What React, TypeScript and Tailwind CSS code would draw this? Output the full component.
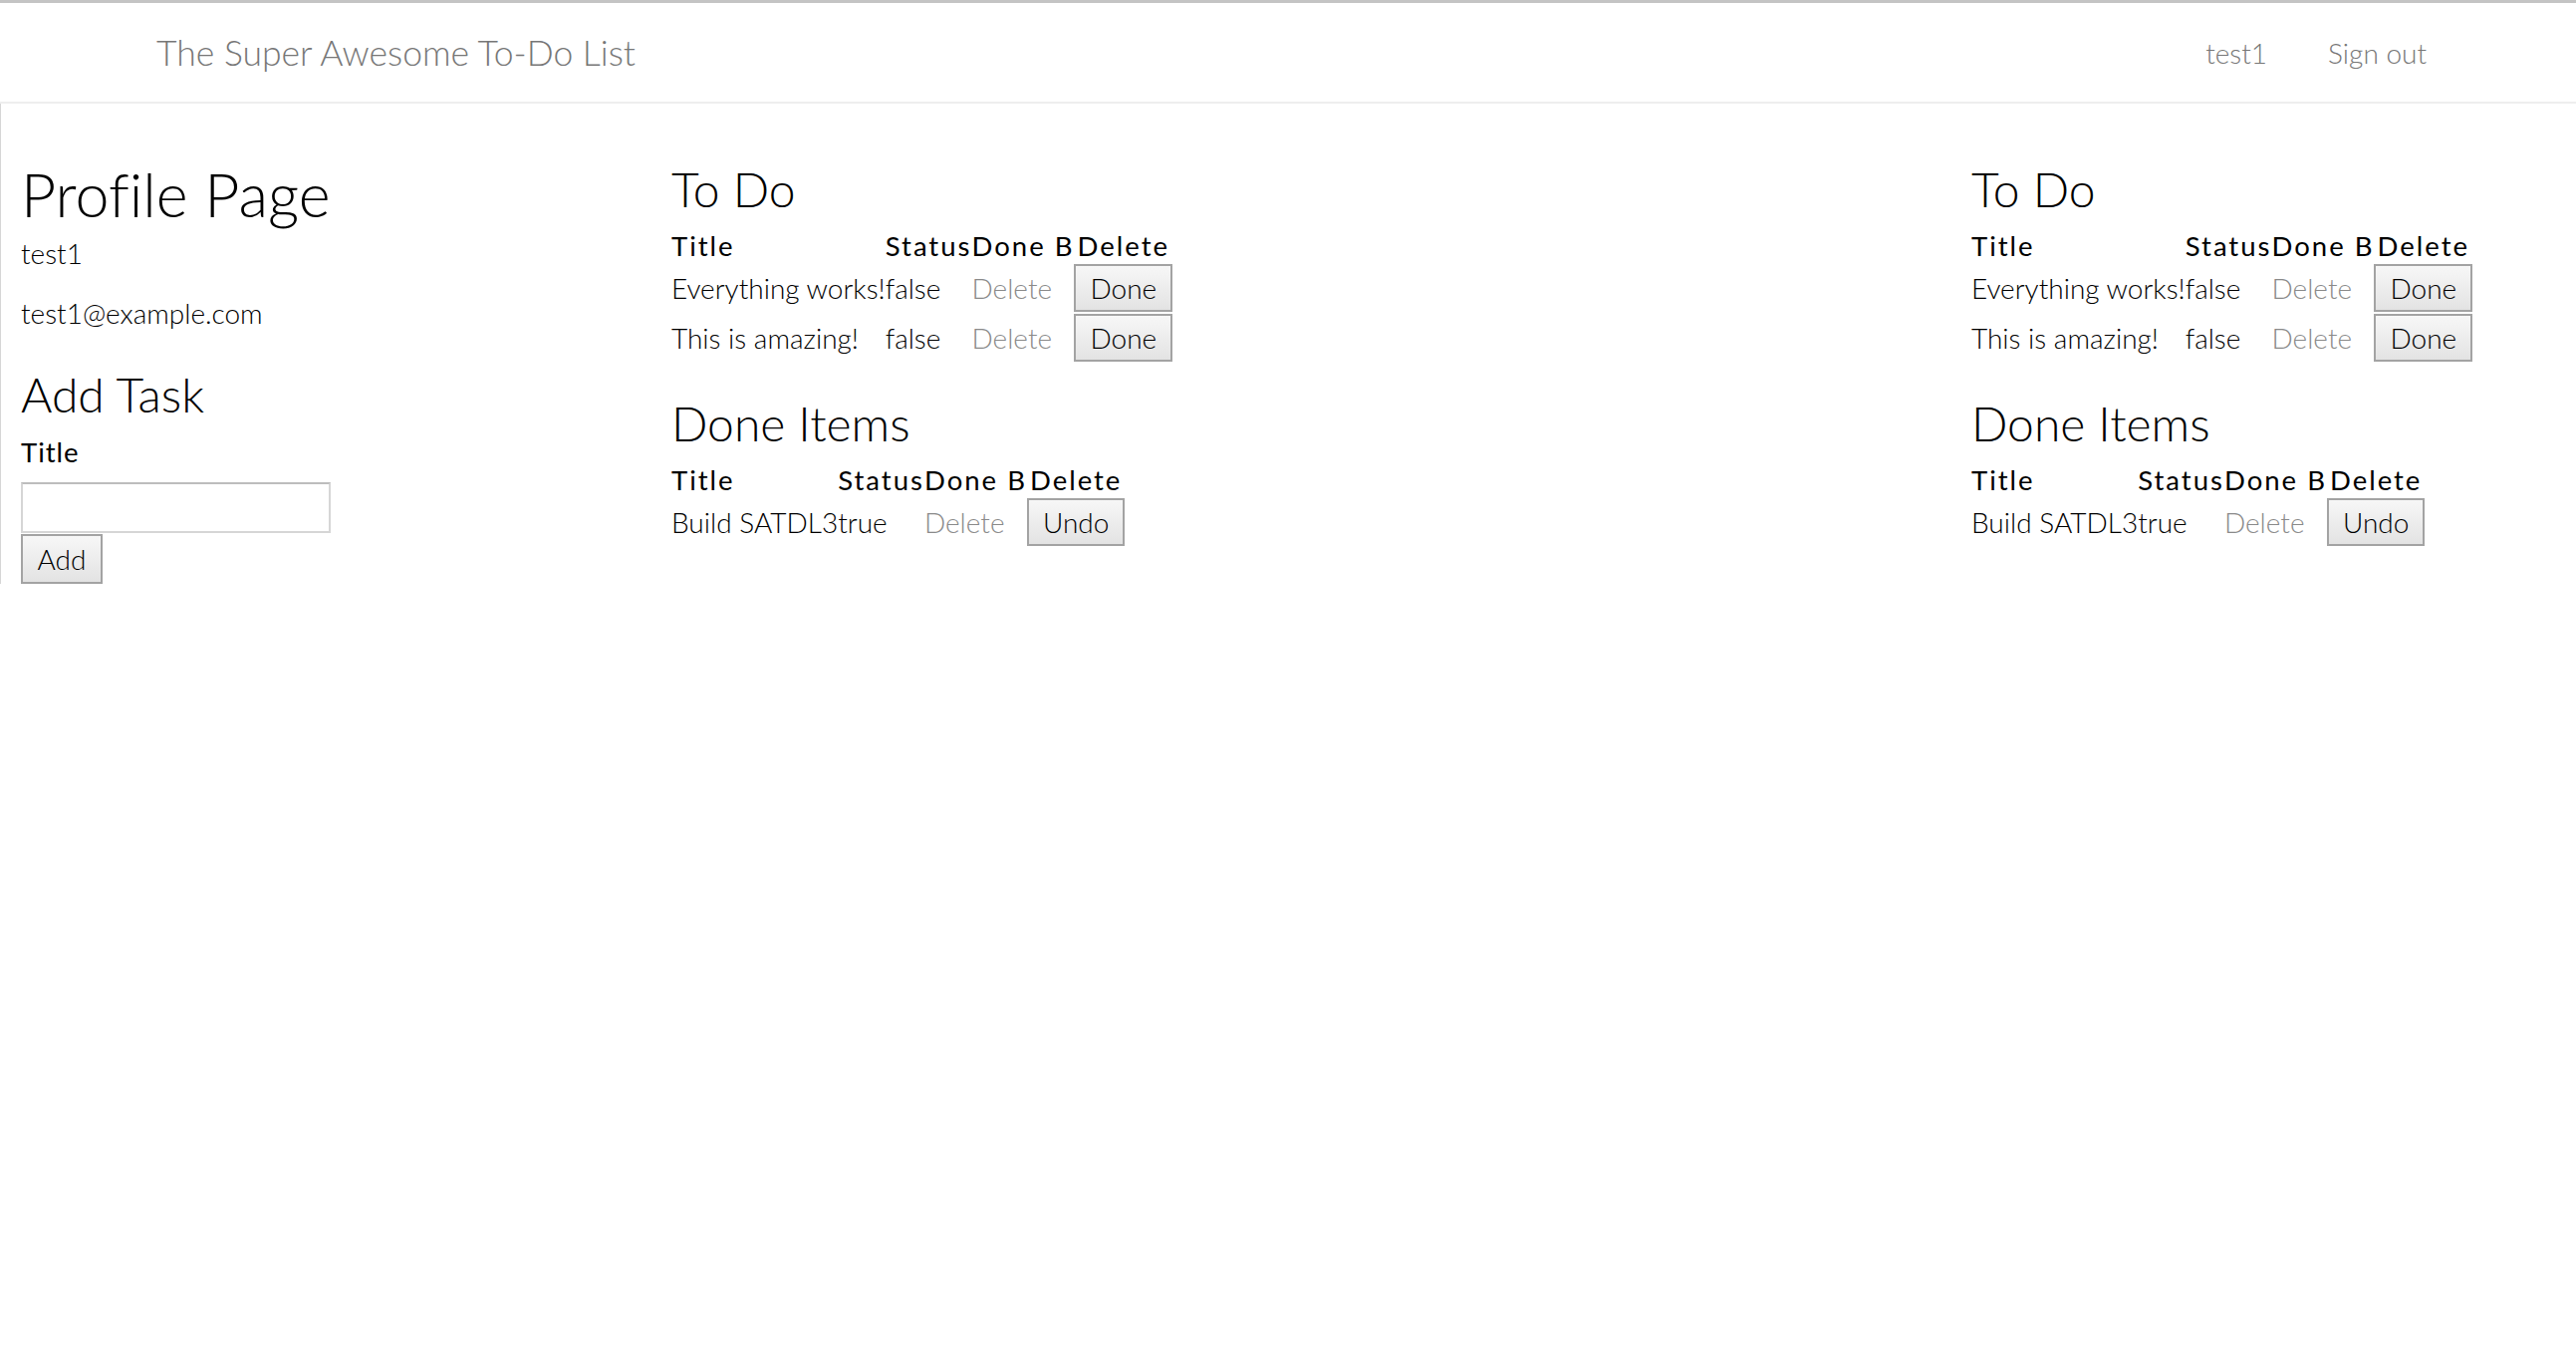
import React from "react";

type Row = { title: string; status: string; action: string };

const todo: Row[] = [
  { title: "Everything works!", status: "false", action: "Done" },
  { title: "This is amazing!", status: "false", action: "Done" },
];

const done: Row[] = [{ title: "Build SATDL3", status: "true", action: "Undo" }];

function Btn({ label }: { label: string }) {
  return (
    <button className="h-[48px] px-[14px] border-2 border-[#a3a3a3] bg-gradient-to-b from-[#f7f7f7] to-[#e3e3e3] text-[28px] leading-none font-light text-black">
      {label}
    </button>
  );
}

function TaskTable({ rows }: { rows: Row[] }) {
  return (
    <table className="border-collapse">
      <thead>
        <tr className="text-center text-[27.5px] leading-[34px] font-normal tracking-[2px] text-black">
          <th className="p-0 font-normal text-left">Title</th>
          <th className="p-0 font-normal">Status</th>
          <th className="p-0 font-normal">Done B</th>
          <th className="p-0 font-normal">Delete</th>
        </tr>
      </thead>
      <tbody>
        {rows.map((r) => (
          <tr key={r.title} className="h-[50px] text-[28px] leading-[40px] font-light">
            <td className="p-0 whitespace-nowrap">{r.title}</td>
            <td className="p-0">{r.status}</td>
            <td className="p-0 text-[#8a8a8a]">Delete</td>
            <td className="p-0">
              <Btn label={r.action} />
            </td>
          </tr>
        ))}
      </tbody>
    </table>
  );
}

function Lists() {
  return (
    <div>
      <h2 className="text-[48px] leading-[50px] font-light">To Do</h2>
      <div className="mt-[15px]">
        <TaskTable rows={todo} />
      </div>
      <h2 className="mt-[36px] text-[48px] leading-[50px] font-light">Done Items</h2>
      <div className="mt-[15px]">
        <TaskTable rows={done} />
      </div>
    </div>
  );
}

export default function App() {
  return (
    <div className="min-h-screen bg-white text-black font-['Lato','Open_Sans',sans-serif] font-light [font-variant-ligatures:none]">
      <nav className="h-[104px] border-t-[3px] border-t-[#c4c4c4] border-b-2 border-b-[#eeeeee] flex items-center justify-between pl-[157px] pr-[150px]">
        <span className="text-[35.5px] leading-[44px] text-[#777777]">The Super Awesome To-Do List</span>
        <div className="flex items-center gap-[61px] text-[28px] leading-[40px] text-[#777777]">
          <a>test1</a>
          <a>Sign out</a>
        </div>
      </nav>

      <main className="grid grid-cols-[653px_1fr_607px] pt-[59px] border-l border-l-[#d6d6d6]">
        <div className="pl-[20px]">
          <h1 className="text-[61px] leading-[64px] font-light">Profile Page</h1>
          <p className="mt-[7px] text-[28px] leading-[40px]">test1</p>
          <p className="mt-[20px] text-[28px] leading-[40px]">test1@example.com</p>
          <h2 className="mt-[37px] text-[48px] leading-[50px] font-light">Add Task</h2>
          <label className="block mt-[16px] text-[27.5px] leading-[34px] font-normal tracking-[1px]">Title</label>
          <input
            type="text"
            className="block mt-[13px] w-[311px] h-[51px] border-2 border-[#d6d6d6] border-t-[#bdbdbd] bg-white outline-none"
          />
          <button className="block mt-[1px] w-[82px] h-[50px] border-2 border-[#a3a3a3] bg-gradient-to-b from-[#f7f7f7] to-[#e3e3e3] text-[28px] leading-none font-light">
            Add
          </button>
        </div>
        <div className="pl-[20px] pt-[2px]">
          <Lists />
        </div>
        <div className="pt-[2px]">
          <Lists />
        </div>
      </main>
    </div>
  );
}
